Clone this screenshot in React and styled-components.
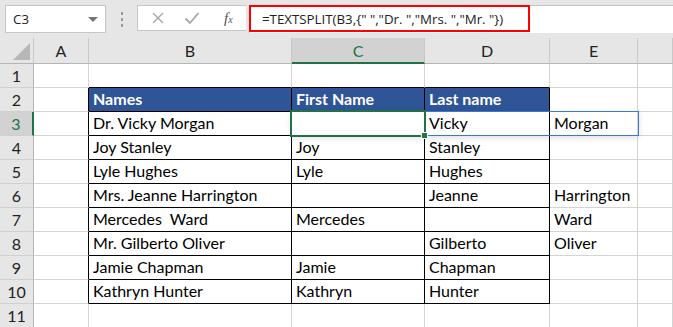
import React from "react";
import styled, { createGlobalStyle } from "styled-components";

const GlobalStyle = createGlobalStyle`
  html, body { margin: 0; padding: 0; background: #ffffff; }
  body { font-family: "Lato", "Liberation Sans", sans-serif; overflow: hidden; }
`;

const COLS = ["A", "B", "C", "D", "E", ""];

const ROWS = [
  null,
  ["Names", "First Name", "Last name", ""],
  ["Dr. Vicky Morgan", "", "Vicky", "Morgan"],
  ["Joy Stanley", "Joy", "Stanley", ""],
  ["Lyle Hughes", "Lyle", "Hughes", ""],
  ["Mrs. Jeanne Harrington", "", "Jeanne", "Harrington"],
  ["Mercedes  Ward", "Mercedes", "", "Ward"],
  ["Mr. Gilberto Oliver", "", "Gilberto", "Oliver"],
  ["Jamie Chapman", "Jamie", "Chapman", ""],
  ["Kathryn Hunter", "Kathryn", "Hunter", ""],
  null,
];

const GRID = "#d4d4d4";
const INK = "#000000";
const GREEN = "#217346";

const App = () => {
  return (
    <>
      <GlobalStyle />
      <Window>
        <FormulaBar>
          <NameBox>
            <span>C3</span>
            <Caret />
          </NameBox>
          <Grip>
            <i />
            <i />
            <i />
          </Grip>
          <ButtonBox>
            <svg width="14" height="14" viewBox="0 0 14 14">
              <path d="M2 2 L12 12 M12 2 L2 12" stroke="#a6a6a6" strokeWidth="1.4" fill="none" />
            </svg>
            <svg width="16" height="14" viewBox="0 0 16 14">
              <path d="M1.5 7.5 L6 12 L14.5 2" stroke="#a6a6a6" strokeWidth="1.8" fill="none" />
            </svg>
            <Fx>
              f<small>x</small>
            </Fx>
          </ButtonBox>
          <Input>
            <Formula>{'=TEXTSPLIT(B3,{" ","Dr. ","Mrs. ","Mr. "})'}</Formula>
          </Input>
        </FormulaBar>

        <Sheet>
          <Corner $r={1} $c={1}>
            <svg width="17" height="17" viewBox="0 0 17 17">
              <path d="M17 0 L17 17 L0 17 Z" fill="#b7b7b7" />
            </svg>
          </Corner>
          {COLS.map((c, i) => (
            <ColHead key={c + i} $r={1} $c={i + 2} $active={c === "C"}>
              {c}
            </ColHead>
          ))}

          {ROWS.map((row, r) => {
            const n = r + 1;
            const gr = n + 1;
            const inTable = n >= 2 && n <= 10;
            return (
              <React.Fragment key={n}>
                <RowHead $r={gr} $c={1} $active={n === 3}>
                  {n}
                </RowHead>
                <Cell $r={gr} $c={2} $right={inTable ? INK : GRID} />
                {[0, 1, 2].map((k) => (
                  <Cell
                    key={k}
                    $r={gr}
                    $c={3 + k}
                    $right={inTable ? INK : GRID}
                    $bottom={n <= 10 ? INK : GRID}
                    $fill={n === 2 ? "#2f5597" : "#ffffff"}
                    $bold={n === 2}
                    $color={n === 2 ? "#ffffff" : "#000000"}
                  >
                    {row ? row[k] : ""}
                  </Cell>
                ))}
                <Cell $r={gr} $c={6}>
                  {row && n !== 2 ? row[3] : ""}
                </Cell>
                <Cell $r={gr} $c={7} />
              </React.Fragment>
            );
          })}

          <Spill />
          <Selection>
            <Handle />
          </Selection>
        </Sheet>
      </Window>
    </>
  );
};

export default App;

const Window = styled.div`
  width: 673px;
  height: 327px;
  overflow: hidden;
  background: #e6e6e6;
`;

const FormulaBar = styled.div`
  height: 38px;
  display: flex;
  align-items: flex-start;
  padding: 5px 0 0 5px;
  box-sizing: border-box;
`;

const NameBox = styled.div`
  width: 101px;
  height: 28px;
  box-sizing: border-box;
  background: #ffffff;
  border: 1px solid #c6c6c6;
  display: flex;
  align-items: center;
  justify-content: space-between;
  padding: 0 7px 0 7px;
  font-family: "Open Sans", "Liberation Sans", sans-serif;
  font-size: 13.3px;
  color: #222222;
`;

const Caret = styled.div`
  width: 0;
  height: 0;
  border-left: 5px solid transparent;
  border-right: 5px solid transparent;
  border-top: 5px solid #767676;
`;

const Grip = styled.div`
  width: 31px;
  height: 28px;
  display: flex;
  flex-direction: column;
  align-items: center;
  justify-content: center;
  gap: 3px;
  i {
    display: block;
    width: 2px;
    height: 3px;
    background: #9a9a9a;
  }
`;

const ButtonBox = styled.div`
  width: 109px;
  height: 26px;
  box-sizing: border-box;
  background: #ffffff;
  border: 1px solid #c6c6c6;
  border-right: none;
  display: flex;
  align-items: center;
  padding: 0 10px 0 13px;
  gap: 19px;
`;

const Fx = styled.span`
  font-family: "Liberation Serif", serif;
  font-style: italic;
  font-size: 15px;
  color: #555555;
  margin-left: 5px;
  small {
    font-size: 10px;
  }
`;

const Input = styled.div`
  flex: 1;
  height: 28px;
  box-sizing: border-box;
  background: #ffffff;
  border-top: 1px solid #c6c6c6;
  border-left: 1px solid #c6c6c6;
  margin-left: 3px;
`;

const Formula = styled.div`
  width: 281px;
  height: 27px;
  box-sizing: border-box;
  margin: -1px 0 0 -1px;
  border: 2px solid #ff0000;
  display: flex;
  align-items: center;
  padding-left: 11px;
  font-family: "Open Sans", "Liberation Sans", sans-serif;
  font-size: 13.3px;
  color: #222222;
  white-space: pre;
`;

const Sheet = styled.div`
  display: grid;
  grid-template-columns: 34px 55px 203px 133px 125px 88px 1fr;
  grid-template-rows: 26px repeat(11, 24px);
  background: #ffffff;
`;

const Placed = styled.div`
  grid-row: ${(p) => p.$r};
  grid-column: ${(p) => p.$c};
`;

const Corner = styled(Placed)`
  background: #e6e6e6;
  border-right: 1px solid #c8c8c8;
  border-bottom: 1px solid #b5b5b5;
  display: flex;
  align-items: flex-end;
  justify-content: flex-end;
  padding: 0 3px 3px 0;
`;

const ColHead = styled(Placed)`
  background: ${(p) => (p.$active ? "#d2d2d2" : "#e6e6e6")};
  color: ${(p) => (p.$active ? GREEN : "#222222")};
  border-right: 1px solid #c8c8c8;
  border-bottom: ${(p) => (p.$active ? `2px solid ${GREEN}` : "1px solid #b5b5b5")};
  display: flex;
  align-items: center;
  justify-content: center;
  font-size: 16px;
  padding-top: ${(p) => (p.$active ? "1px" : "0")};
`;

const RowHead = styled(Placed)`
  background: ${(p) => (p.$active ? "#d2d2d2" : "#e6e6e6")};
  color: ${(p) => (p.$active ? GREEN : "#222222")};
  border-right: ${(p) => (p.$active ? `2px solid ${GREEN}` : "1px solid #b5b5b5")};
  border-bottom: 1px solid #d0d0d0;
  display: flex;
  align-items: center;
  justify-content: center;
  font-size: 16px;
`;

const Cell = styled(Placed)`
  background: ${(p) => p.$fill || "#ffffff"};
  color: ${(p) => p.$color || "#000000"};
  font-weight: ${(p) => (p.$bold ? 700 : 400)};
  border-right: 1px solid ${(p) => p.$right || GRID};
  border-bottom: 1px solid ${(p) => p.$bottom || GRID};
  display: flex;
  align-items: flex-end;
  padding: 0 0 2px 4px;
  font-size: 16px;
  line-height: 20px;
  white-space: pre;
  overflow: visible;
`;

const Spill = styled.div`
  grid-column: 4 / 7;
  grid-row: 4;
  margin: -1px -1px 0 -1px;
  border: 1px solid #3a78d4;
  box-shadow: 0 2px 6px rgba(0, 0, 0, 0.12);
  pointer-events: none;
`;

const Selection = styled.div`
  grid-column: 4;
  grid-row: 4;
  margin: -2px -1px -1px -2px;
  border: 2px solid ${GREEN};
  position: relative;
  pointer-events: none;
`;

const Handle = styled.div`
  position: absolute;
  right: -4px;
  bottom: -4px;
  width: 5px;
  height: 5px;
  background: ${GREEN};
  border: 1px solid #ffffff;
`;
